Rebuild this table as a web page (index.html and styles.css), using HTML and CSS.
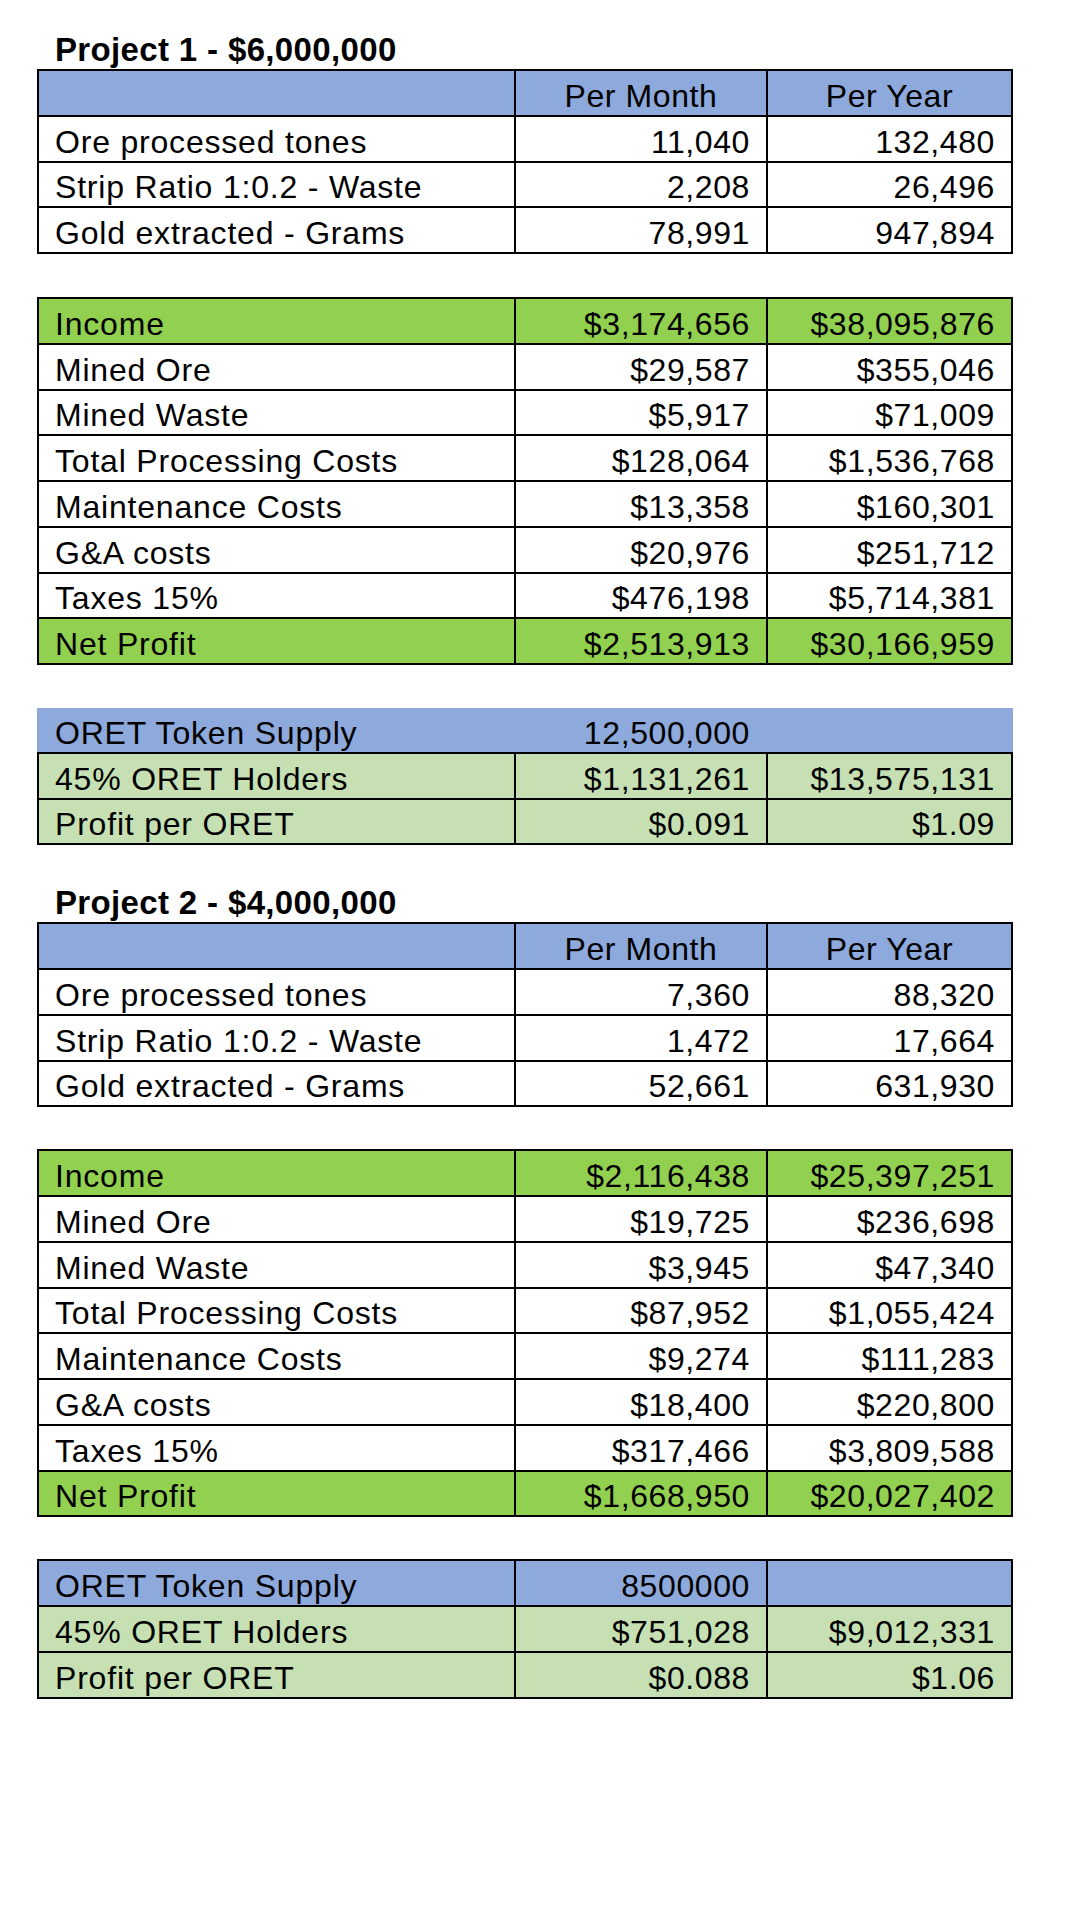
FILE: index.html
```html
<!DOCTYPE html>
<html>
<head>
<meta charset="utf-8">
<link rel="stylesheet" href="styles.css">
</head>
<body>
<div class="page">
  <section class="project">
    <h2 class="title">Project 1 - $6,000,000</h2>
    <div class="tbl">
      <div class="c blue"></div><div class="c blue ctr">Per Month</div><div class="c blue ctr">Per Year</div>
      <div class="c lbl">Ore processed tones</div><div class="c r">11,040</div><div class="c r">132,480</div>
      <div class="c lbl">Strip Ratio 1:0.2 - Waste</div><div class="c r">2,208</div><div class="c r">26,496</div>
      <div class="c lbl">Gold extracted - Grams</div><div class="c r">78,991</div><div class="c r">947,894</div>
    </div>
    <div class="tbl gap-top">
      <div class="c lbl green">Income</div><div class="c green r">$3,174,656</div><div class="c green r">$38,095,876</div>
      <div class="c lbl">Mined Ore</div><div class="c r">$29,587</div><div class="c r">$355,046</div>
      <div class="c lbl">Mined Waste</div><div class="c r">$5,917</div><div class="c r">$71,009</div>
      <div class="c lbl">Total Processing Costs</div><div class="c r">$128,064</div><div class="c r">$1,536,768</div>
      <div class="c lbl">Maintenance Costs</div><div class="c r">$13,358</div><div class="c r">$160,301</div>
      <div class="c lbl">G&amp;A costs</div><div class="c r">$20,976</div><div class="c r">$251,712</div>
      <div class="c lbl">Taxes 15%</div><div class="c r">$476,198</div><div class="c r">$5,714,381</div>
      <div class="c lbl green">Net Profit</div><div class="c green r">$2,513,913</div><div class="c green r">$30,166,959</div>
    </div>
    <div class="band gap-top">
      <div class="c lbl blue">ORET Token Supply</div><div class="c blue r">12,500,000</div><div class="c blue"></div>
    </div>
    <div class="tbl">
      <div class="c lbl light">45% ORET Holders</div><div class="c light r">$1,131,261</div><div class="c light r">$13,575,131</div>
      <div class="c lbl light">Profit per ORET</div><div class="c light r">$0.091</div><div class="c light r">$1.09</div>
    </div>
  </section>

  <section class="project second">
    <h2 class="title">Project 2 - $4,000,000</h2>
    <div class="tbl">
      <div class="c blue"></div><div class="c blue ctr">Per Month</div><div class="c blue ctr">Per Year</div>
      <div class="c lbl">Ore processed tones</div><div class="c r">7,360</div><div class="c r">88,320</div>
      <div class="c lbl">Strip Ratio 1:0.2 - Waste</div><div class="c r">1,472</div><div class="c r">17,664</div>
      <div class="c lbl">Gold extracted - Grams</div><div class="c r">52,661</div><div class="c r">631,930</div>
    </div>
    <div class="tbl gap-top2">
      <div class="c lbl green">Income</div><div class="c green r">$2,116,438</div><div class="c green r">$25,397,251</div>
      <div class="c lbl">Mined Ore</div><div class="c r">$19,725</div><div class="c r">$236,698</div>
      <div class="c lbl">Mined Waste</div><div class="c r">$3,945</div><div class="c r">$47,340</div>
      <div class="c lbl">Total Processing Costs</div><div class="c r">$87,952</div><div class="c r">$1,055,424</div>
      <div class="c lbl">Maintenance Costs</div><div class="c r">$9,274</div><div class="c r">$111,283</div>
      <div class="c lbl">G&amp;A costs</div><div class="c r">$18,400</div><div class="c r">$220,800</div>
      <div class="c lbl">Taxes 15%</div><div class="c r">$317,466</div><div class="c r">$3,809,588</div>
      <div class="c lbl green">Net Profit</div><div class="c green r">$1,668,950</div><div class="c green r">$20,027,402</div>
    </div>
    <div class="tbl gap-top3">
      <div class="c lbl blue">ORET Token Supply</div><div class="c blue r">8500000</div><div class="c blue"></div>
      <div class="c lbl light">45% ORET Holders</div><div class="c light r">$751,028</div><div class="c light r">$9,012,331</div>
      <div class="c lbl light">Profit per ORET</div><div class="c light r">$0.088</div><div class="c light r">$1.06</div>
    </div>
  </section>
</div>
</body>
</html>
```

FILE: styles.css
```css
html, body {
  margin: 0;
  padding: 0;
  background: #ffffff;
}

.page {
  width: 1080px;
  height: 1920px;
  box-sizing: border-box;
  padding: 33px 0 0 37px;
  font-family: "Liberation Sans", Arial, sans-serif;
  color: #000;
}

.project.second {
  margin-top: 41px;
}

.title {
  margin: 0 0 3px 18px;
  font-size: 33px;
  line-height: 33px;
  height: 33px;
  font-weight: bold;
  letter-spacing: 0.35px;
}

.tbl {
  display: grid;
  grid-template-columns: 475px 250px 243px;
  gap: 2px;
  background: #000;
  border: 2px solid #000;
  width: 976px;
  box-sizing: border-box;
}

.band {
  display: grid;
  grid-template-columns: 475px 250px 243px;
  gap: 2px;
  padding: 0 2px;
  background: #8ea9db;
  width: 976px;
  box-sizing: border-box;
}

.gap-top {
  margin-top: 43px;
}

.gap-top2 {
  margin-top: 42px;
}

.gap-top3 {
  margin-top: 42px;
}

.c {
  background: #ffffff;
  height: 43.75px;
  box-sizing: border-box;
  display: flex;
  align-items: flex-end;
  padding: 0 16px 3px 16px;
  font-size: 32px;
  line-height: 32px;
  letter-spacing: 0.6px;
  white-space: nowrap;
}

.c.lbl {
  letter-spacing: 0.8px;
}

.c.r {
  justify-content: flex-end;
}

.c.ctr {
  justify-content: center;
}

.c.blue {
  background: #8ea9db;
}

.c.green {
  background: #92d050;
}

.c.light {
  background: #c6e0b4;
}
```
